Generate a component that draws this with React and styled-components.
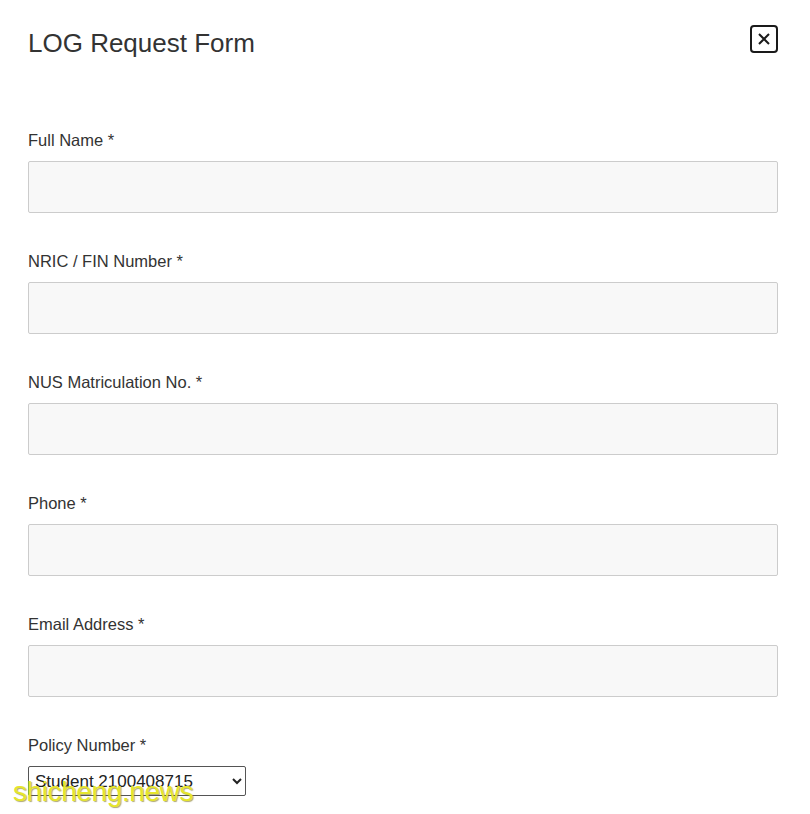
import React from 'react';
import { styled, createGlobalStyle } from 'styled-components';

const GlobalStyle = createGlobalStyle`
  body {
    margin: 0;
    background: #ffffff;
    font-family: "Liberation Sans", Arial, sans-serif;
  }
`;

const Page = styled.div`
  position: relative;
  width: 810px;
  height: 814px;
  box-sizing: border-box;
  padding: 25px 32px 0 28px;
  overflow: hidden;
`;

const Header = styled.div`
  display: flex;
  justify-content: space-between;
  align-items: flex-start;
`;

const Title = styled.h1`
  margin: 0;
  font-size: 26px;
  line-height: 36px;
  font-weight: 400;
  color: #333333;
`;

const CloseButton = styled.button`
  width: 28px;
  height: 28px;
  padding: 0;
  display: flex;
  align-items: center;
  justify-content: center;
  border: 2px solid #1a1a1a;
  border-radius: 4px;
  background: #ffffff;
  box-sizing: border-box;
`;

const Form = styled.form`
  margin-top: 69px;
  display: flex;
  flex-direction: column;
  gap: 38px;
`;

const Field = styled.div`
  display: flex;
  flex-direction: column;
  gap: 11px;
`;

const Label = styled.label`
  font-size: 16.5px;
  line-height: 19px;
  padding-top: 1px;
  color: #333333;
`;

const Input = styled.input`
  width: 750px;
  height: 52px;
  box-sizing: border-box;
  background: #f8f8f8;
  border: 1px solid #cccccc;
  border-radius: 2px;
  font-size: 16px;
  padding: 0 12px;
`;

const Select = styled.select`
  width: 218px;
  height: 30px;
  box-sizing: border-box;
  border: 1px solid #555555;
  border-radius: 2px;
  background: #ffffff;
  color: #222222;
  font-family: "Liberation Sans", Arial, sans-serif;
  font-size: 17px;
  padding: 0 2px;
`;

const Watermark = styled.div`
  position: absolute;
  left: 13px;
  top: 776px;
  font-family: "Liberation Sans", sans-serif;
  font-size: 28px;
  letter-spacing: -0.4px;
  color: #e6e52c;
  text-shadow: 1px 1px 1px rgba(120, 110, 20, 0.6);
  pointer-events: none;
`;

const fields = [
  'Full Name *',
  'NRIC / FIN Number *',
  'NUS Matriculation No. *',
  'Phone *',
  'Email Address *',
];

const App = () => (
  <>
    <GlobalStyle />
    <Page>
      <Header>
        <Title>LOG Request Form</Title>
        <CloseButton type="button" aria-label="Close">
          <svg width="14" height="14" viewBox="0 0 14 14">
            <path d="M2 2 L12 12 M12 2 L2 12" stroke="#1a1a1a" strokeWidth="2" />
          </svg>
        </CloseButton>
      </Header>
      <Form>
        {fields.map((label) => (
          <Field key={label}>
            <Label>{label}</Label>
            <Input type="text" />
          </Field>
        ))}
        <Field>
          <Label>Policy Number *</Label>
          <Select defaultValue="s">
            <option value="s">Student 2100408715</option>
          </Select>
        </Field>
      </Form>
      <Watermark>shicheng.news</Watermark>
    </Page>
  </>
);

export default App;
